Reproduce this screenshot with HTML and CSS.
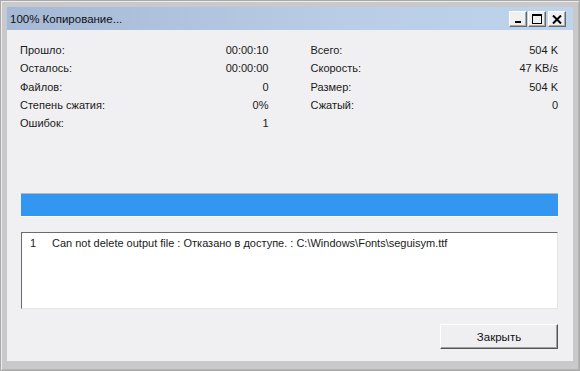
FILE: index.html
```html
<!DOCTYPE html>
<html lang="ru">
<head>
<meta charset="utf-8">
<link rel="stylesheet" href="styles.css">
</head>
<body>
<div class="window">
  <div class="title-bar">
    <span class="title">100% Копирование...</span>
    <div class="title-buttons">
      <button class="tb-btn">
        <svg width="8" height="8" viewBox="0 0 8 8"><rect x="1" y="6" width="6" height="2" fill="#000"/></svg>
      </button>
      <button class="tb-btn">
        <svg width="10" height="10" viewBox="0 0 10 10"><rect x="0.5" y="0.5" width="9" height="9" fill="none" stroke="#000"/><rect x="0" y="0" width="10" height="2" fill="#000"/></svg>
      </button>
      <button class="tb-btn close">
        <svg width="10" height="9" viewBox="0 0 10 9"><path d="M1 0.5 L9 8.5 M9 0.5 L1 8.5" stroke="#000" stroke-width="2"/></svg>
      </button>
    </div>
  </div>

  <div class="client">
    <div class="stats">
      <div class="stat-col left">
        <div class="row"><span>Прошло:</span><span>00:00:10</span></div>
        <div class="row"><span>Осталось:</span><span>00:00:00</span></div>
        <div class="row"><span>Файлов:</span><span>0</span></div>
        <div class="row"><span>Степень сжатия:</span><span>0%</span></div>
        <div class="row"><span>Ошибок:</span><span>1</span></div>
      </div>
      <div class="stat-col right">
        <div class="row"><span>Всего:</span><span>504 K</span></div>
        <div class="row"><span>Скорость:</span><span>47 KB/s</span></div>
        <div class="row"><span>Размер:</span><span>504 K</span></div>
        <div class="row"><span>Сжатый:</span><span>0</span></div>
      </div>
    </div>

    <div class="progress">
      <div class="progress-fill" style="width: 100%"></div>
    </div>

    <div class="log">
      <div class="log-line"><span class="log-num">1</span><span>Can not delete output file : Отказано в доступе. : C:\Windows\Fonts\seguisym.ttf</span></div>
    </div>

    <div class="footer">
      <button class="close-btn">Закрыть</button>
    </div>
  </div>
</div>
</body>
</html>
```

FILE: styles.css
```css
* {
  box-sizing: border-box;
}
body {
  margin: 0;
  background: #ffffff;
  font-family: "Liberation Sans", Arial, sans-serif;
  font-size: 11px;
  color: #1a1a1a;
}
.window {
  width: 580px;
  height: 371px;
  display: flex;
  flex-direction: column;
  background: #c9c9cb;
  border: 1px solid #a9a9a9;
  box-shadow: inset 1px 1px 0 #ececec, inset -1px -1px 0 #b5b5b5;
  padding: 6px 6px 9px;
}
.title-bar {
  height: 23px;
  flex-shrink: 0;
  display: flex;
  align-items: center;
  justify-content: space-between;
  padding: 0 7px 0 3px;
  background: linear-gradient(to right, #a5b9d6, #b9cde6 60%, #bdd4ec);
}
.title {
  font-size: 11.5px;
  color: #111;
}
.title-buttons {
  display: flex;
  gap: 1px;
  margin-top: 1px;
}
.tb-btn {
  width: 18px;
  height: 16px;
  padding: 0;
  display: flex;
  align-items: center;
  justify-content: center;
  background: #f0f0f0;
  border: 1px solid;
  border-color: #ffffff #6a6a6a #6a6a6a #ffffff;
  box-shadow: inset -1px -1px 0 #a8a8a8;
}
.tb-btn.close {
  margin-left: 1px;
}
.client {
  flex: 1;
  display: flex;
  flex-direction: column;
  background: #f0eff1;
  padding: 11px 15px 12px 14px;
}
.stats {
  display: flex;
  gap: 42px;
  margin-left: -1px;
}
.stat-col.left {
  width: 249px;
}
.stat-col.right {
  width: 248px;
}
.row {
  display: flex;
  justify-content: space-between;
  height: 18.3px;
  line-height: 18.3px;
}
.progress {
  margin-top: 61px;
  height: 24px;
  border-top: 1px solid #b9b9b9;
  border-bottom: 1px solid #ffffff;
  background: #e6e6e6;
}
.progress-fill {
  height: 100%;
  background: #3396f0;
}
.log {
  margin-top: 15px;
  height: 77px;
  background: #ffffff;
  border: 1px solid;
  border-color: #6b6b6b #e4e4e4 #e4e4e4 #6b6b6b;
  padding: 2px 0 0 8px;
}
.log-line {
  display: flex;
  line-height: 16px;
}
.log-num {
  width: 22px;
}
.footer {
  margin-top: auto;
  display: flex;
  justify-content: flex-end;
}
.close-btn {
  width: 118px;
  height: 25px;
  font-family: inherit;
  font-size: 11.5px;
  color: #111;
  background: #efeef1;
  border: 1px solid;
  border-color: #ffffff #555555 #555555 #ffffff;
  box-shadow: inset -1px -1px 0 #a0a0a0;
  padding: 0;
}
```
